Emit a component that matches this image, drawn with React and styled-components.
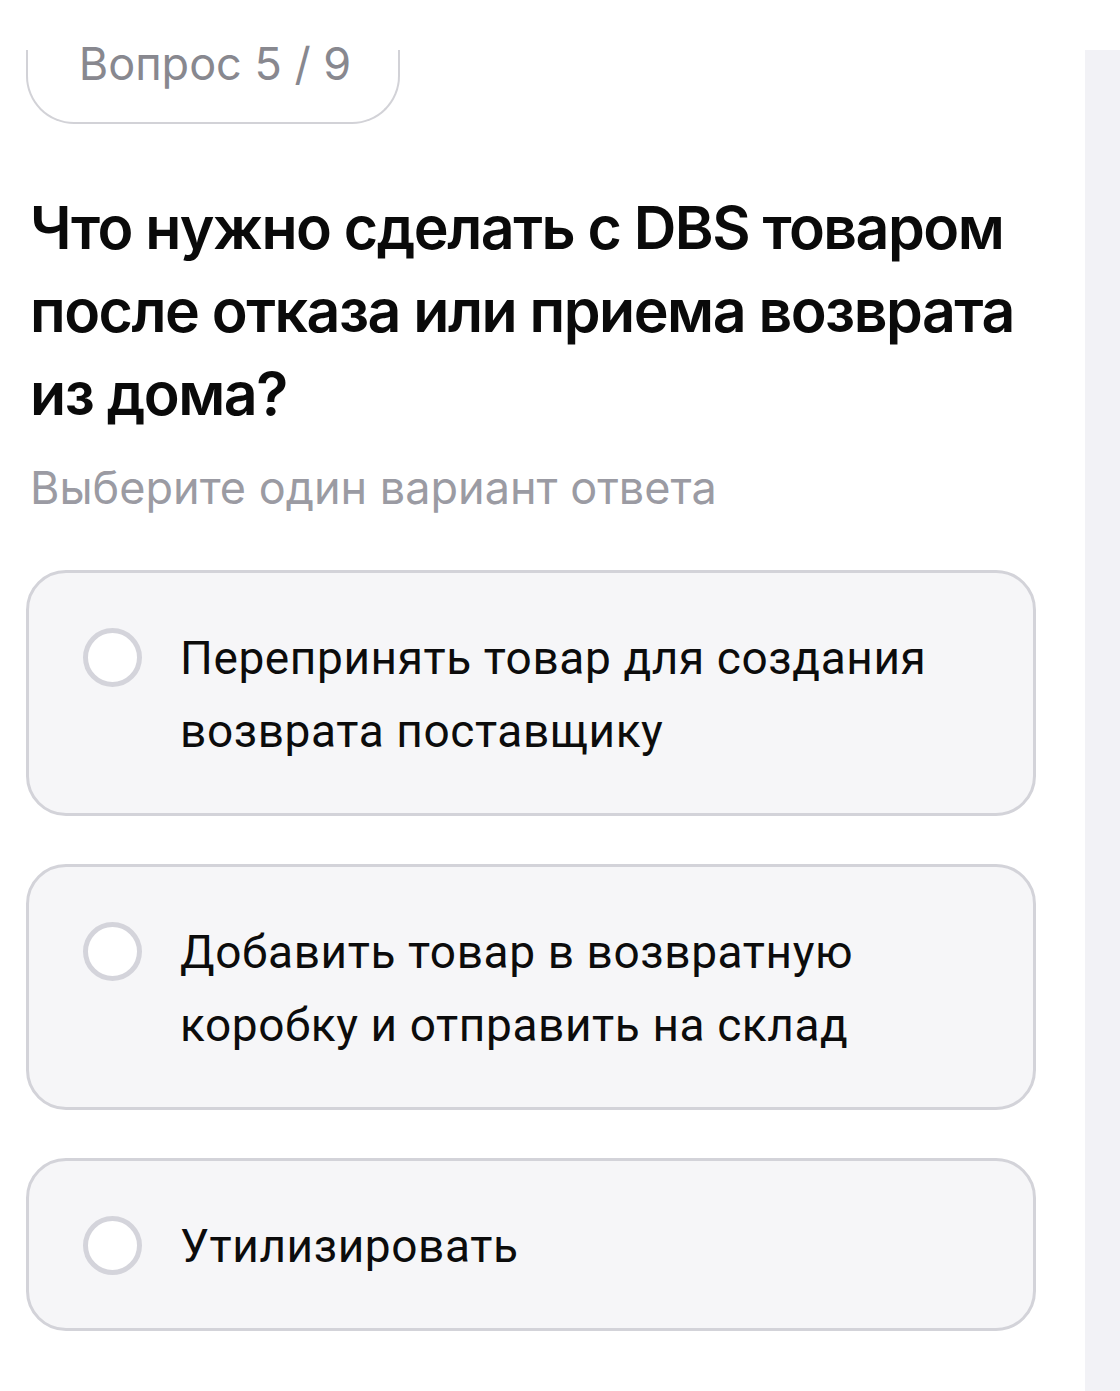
import React from "react";
import styled, { createGlobalStyle } from "styled-components";

const GlobalStyle = createGlobalStyle`
  html, body {
    margin: 0;
    padding: 0;
    background: #ffffff;
  }
  body {
    font-family: Inter, "Noto Sans", sans-serif;
    -webkit-font-smoothing: antialiased;
  }
`;

const Page = styled.div`
  display: grid;
  grid-template-columns: 1fr 35px;
  min-height: 1341px;
  margin-top: 50px;
`;

const Main = styled.main`
  padding: 0 49px 40px 26px;
  display: flex;
  flex-direction: column;
  align-items: flex-start;
`;

const SidePanel = styled.aside`
  background: #f2f2f6;
`;

const Counter = styled.div`
  width: 374px;
  height: 74px;
  box-sizing: border-box;
  border: 2px solid #d2d2d7;
  border-top: none;
  border-radius: 0 0 48px 48px;
  display: flex;
  justify-content: center;
  span {
    margin-top: -9px;
    font-size: 45px;
    line-height: 46px;
    color: #88888f;
    transform: translateX(2px);
  }
`;

const Question = styled.h1`
  margin: 62px 0 0 4px;
  font-size: 59px;
  line-height: 83px;
  font-weight: 600;
  color: #0a0a0a;
  letter-spacing: -1.5px;
  white-space: nowrap;
`;

const Hint = styled.p`
  margin: 23px 0 0 4px;
  font-size: 45px;
  line-height: 60px;
  color: #9b9ba3;
`;

const Options = styled.div`
  margin-top: 52px;
  width: 100%;
  display: flex;
  flex-direction: column;
  gap: 48px;
`;

const Option = styled.label`
  display: flex;
  align-items: flex-start;
  gap: 38px;
  box-sizing: border-box;
  padding: 49px 40px 45px 54px;
  background: #f6f6f8;
  border: 3px solid #d3d3d9;
  border-radius: 40px;
  cursor: pointer;
`;

const Radio = styled.span`
  flex: none;
  width: 59px;
  height: 59px;
  box-sizing: border-box;
  margin-top: 6px;
  border-radius: 50%;
  border: 5px solid #d4d4db;
  background: #ffffff;
`;

const OptionText = styled.span`
  font-family: Roboto, "Noto Sans", sans-serif;
  font-size: 46px;
  line-height: 73px;
  letter-spacing: 0.6px;
  color: #0c0c0c;
`;

const answers = [
  ["Перепринять товар для создания", "возврата поставщику"],
  ["Добавить товар в возвратную", "коробку и отправить на склад"],
  ["Утилизировать"],
];

export default function App() {
  return (
    <>
      <GlobalStyle />
      <Page>
        <Main>
          <Counter>
            <span>Вопрос 5 / 9</span>
          </Counter>
          <Question>
            Что нужно сделать с DBS товаром
            <br />
            после отказа или приема возврата
            <br />
            из дома?
          </Question>
          <Hint>Выберите один вариант ответа</Hint>
          <Options>
            {answers.map((lines, i) => (
              <Option key={i}>
                <Radio />
                <OptionText>
                  {lines.map((l, j) => (
                    <React.Fragment key={j}>
                      {j > 0 && <br />}
                      {l}
                    </React.Fragment>
                  ))}
                </OptionText>
              </Option>
            ))}
          </Options>
        </Main>
        <SidePanel />
      </Page>
    </>
  );
}
